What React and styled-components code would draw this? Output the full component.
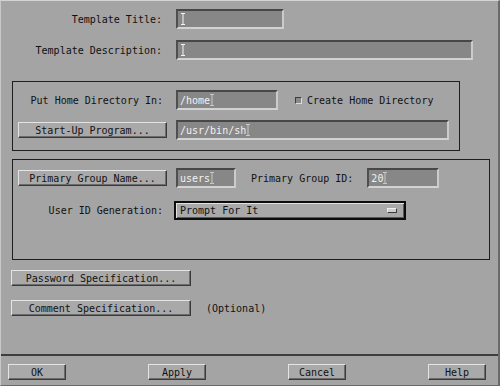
import React from "react";
import styled, { createGlobalStyle } from "styled-components";

const Global = createGlobalStyle`
  html, body {
    margin: 0;
    padding: 0;
    background: #a4a4a4;
  }
  * {
    box-sizing: border-box;
  }
`;

const Cursor = ({ dim }) => (
  <CursorMark viewBox="0 0 4 12" width="4" height="12" $dim={dim}>
    <path d="M0 0.5H4M2 0.5V11.5M0 11.5H4" stroke="currentColor" strokeWidth="1" fill="none" />
  </CursorMark>
);

const App = () => {
  return (
    <>
      <Global />
      <Window>
        <Form>
          <TopRow>
            <LabelCell $w={175} $pad={14}>Template Title:</LabelCell>
            <Field $w={108}><Cursor /></Field>
          </TopRow>
          <TopRow $mt={11}>
            <LabelCell $w={175} $pad={14}>Template Description:</LabelCell>
            <Field $w={297}><Cursor /></Field>
          </TopRow>

          <Group $w={448} $h={70} $mt={21}>
            <GroupRow>
              <LabelCell $w={163} $pad={13}>Put Home Directory In:</LabelCell>
              <Field $w={102}>/home<Cursor dim /></Field>
              <CheckWrap>
                <CheckBox />
                Create Home Directory
              </CheckWrap>
            </GroupRow>
            <GroupRow $mt={10}>
              <ButtonCell $w={163}>
                <Button $w={149}>Start-Up Program...</Button>
              </ButtonCell>
              <Field $w={273}>/usr/bin/sh<Cursor dim /></Field>
            </GroupRow>
          </Group>

          <Group $w={478} $h={101} $mt={8}>
            <GroupRow>
              <ButtonCell $w={163}>
                <Button $w={149}>Primary Group Name...</Button>
              </ButtonCell>
              <Field $w={60}>users<Cursor dim /></Field>
              <InlineLabel $ml={15}>Primary Group ID:</InlineLabel>
              <Field $w={72} $ml={14}>20<Cursor dim /></Field>
            </GroupRow>
            <GroupRow $mt={12}>
              <LabelCell $w={161} $pad={11}>User ID Generation:</LabelCell>
              <OptionMenu>
                <span>Prompt For It</span>
                <OptionMark />
              </OptionMenu>
            </GroupRow>
          </Group>

          <SpecRow $mt={10}>
            <Button $w={180}>Password Specification...</Button>
          </SpecRow>
          <SpecRow $mt={14}>
            <Button $w={180}>Comment Specification...</Button>
            <InlineLabel $ml={15}>(Optional)</InlineLabel>
          </SpecRow>
        </Form>

        <ActionBar>
          <Button $w={58}>OK</Button>
          <Button $w={58}>Apply</Button>
          <Button $w={58}>Cancel</Button>
          <Button $w={58}>Help</Button>
        </ActionBar>
      </Window>
    </>
  );
};

export default App;

const Window = styled.div`
  width: 500px;
  height: 386px;
  display: flex;
  flex-direction: column;
  background: #a4a4a4;
  border-top: 1px solid #d4d4d4;
  border-left: 1px solid #c8c8c8;
  border-right: 2px solid #6a6a6a;
  border-bottom: 1px solid #6a6a6a;
  font-family: "DejaVu Sans Mono", "Liberation Mono", monospace;
  font-size: 10px;
  color: #111;
`;

const Form = styled.div`
  flex: 1;
  display: flex;
  flex-direction: column;
  padding-top: 8px;
`;

const TopRow = styled.div`
  display: flex;
  align-items: center;
  height: 20px;
  margin-top: ${(p) => p.$mt || 0}px;
`;

const LabelCell = styled.div`
  width: ${(p) => p.$w}px;
  padding-right: ${(p) => p.$pad}px;
  text-align: right;
  white-space: nowrap;
  flex-shrink: 0;
`;

const InlineLabel = styled.div`
  margin-left: ${(p) => p.$ml || 0}px;
  white-space: nowrap;
`;

const ButtonCell = styled.div`
  width: ${(p) => p.$w}px;
  padding-left: 5px;
  flex-shrink: 0;
  display: flex;
  align-items: center;
`;

const Field = styled.div`
  width: ${(p) => p.$w}px;
  margin-left: ${(p) => p.$ml || 0}px;
  height: 20px;
  flex-shrink: 0;
  display: flex;
  align-items: center;
  padding-left: 2px;
  background: #878787;
  color: #f2f2f2;
  border-top: 2px solid #474747;
  border-left: 2px solid #4f4f4f;
  border-bottom: 2px solid #d2d2d2;
  border-right: 2px solid #cbcbcb;
  white-space: nowrap;
`;

const CursorMark = styled.svg`
  color: ${(p) => (p.$dim ? "#c9c9c9" : "#f4f4f4")};
  margin-left: ${(p) => (p.$dim ? 0 : 1)}px;
  flex-shrink: 0;
`;

const Group = styled.div`
  width: ${(p) => p.$w}px;
  height: ${(p) => p.$h}px;
  margin-left: 11px;
  margin-top: ${(p) => p.$mt}px;
  border: 1px solid #1e1e1e;
  padding-top: 8px;
  display: flex;
  flex-direction: column;
`;

const GroupRow = styled.div`
  display: flex;
  align-items: center;
  height: 20px;
  margin-top: ${(p) => p.$mt || 0}px;
`;

const Button = styled.div`
  width: ${(p) => p.$w}px;
  height: 16px;
  flex-shrink: 0;
  display: flex;
  align-items: center;
  justify-content: center;
  background: #a9a9a9;
  border-top: 1px solid #e4e4e4;
  border-left: 1px solid #e4e4e4;
  border-bottom: 1px solid #3a3a3a;
  border-right: 1px solid #3a3a3a;
  box-shadow: inset -1px -1px 0 #6c6c6c;
  white-space: nowrap;
  padding-top: 1px;
`;

const CheckWrap = styled.div`
  display: flex;
  align-items: center;
  margin-left: 17px;
  gap: 5px;
  white-space: nowrap;
`;

const CheckBox = styled.span`
  width: 7px;
  height: 7px;
  background: #8a8a8a;
  border-top: 1px solid #3e3e3e;
  border-left: 1px solid #3e3e3e;
  border-bottom: 1px solid #dcdcdc;
  border-right: 1px solid #dcdcdc;
`;

const OptionMenu = styled.div`
  width: 232px;
  height: 19px;
  display: flex;
  align-items: center;
  justify-content: space-between;
  padding: 0 7px 0 4px;
  background: #a9a9a9;
  border: 2px solid #0c0c0c;
  box-shadow: inset 1px 1px 0 #e2e2e2, inset -1px -1px 0 #5a5a5a;
`;

const OptionMark = styled.span`
  width: 10px;
  height: 5px;
  background: #cfcfcf;
  border-top: 1px solid #eeeeee;
  border-left: 1px solid #eeeeee;
  border-bottom: 1px solid #3c3c3c;
  border-right: 1px solid #3c3c3c;
`;

const SpecRow = styled.div`
  display: flex;
  align-items: center;
  padding-left: 10px;
  margin-top: ${(p) => p.$mt}px;
`;

const ActionBar = styled.div`
  height: 31px;
  border-top: 2px solid #3e3e3e;
  display: flex;
  align-items: flex-start;
  gap: 82px;
  padding: 8px 0 0 7px;
`;
